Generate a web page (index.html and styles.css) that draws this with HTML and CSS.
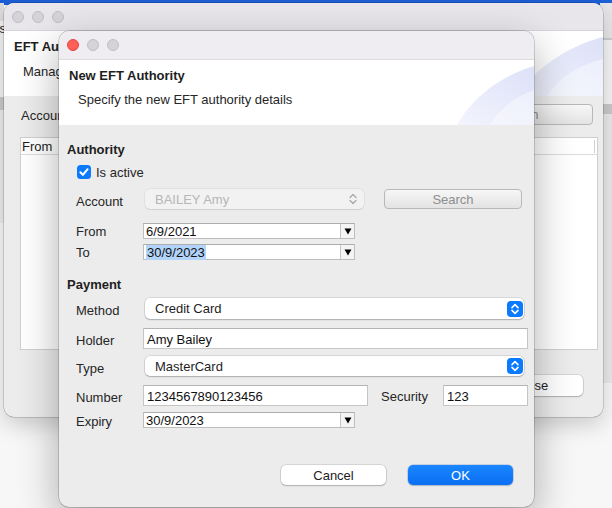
FILE: index.html
```html
<!DOCTYPE html>
<html>
<head>
<meta charset="utf-8">
<title>New EFT Authority</title>
<link rel="stylesheet" href="styles.css">
</head>
<body>
<div class="desk-top"></div>
<div class="back-left"><span class="back-left-text">Settings</span></div>
<div class="back-right"></div>

<div class="win win-main">
  <div class="titlebar">
    <span class="light"></span><span class="light"></span><span class="light"></span>
  </div>
  <div class="hdr">
    <div class="hdr-title">EFT Authorities</div>
    <div class="hdr-sub main-sub">Manage EFT authorities</div>
    <svg class="swirl swirl-main" viewBox="0 0 90 65" preserveAspectRatio="none">
      <defs>
        <linearGradient id="gm" x1="0" y1="1" x2="1" y2="0">
          <stop offset="0" stop-color="#f1f3fd"/>
          <stop offset="1" stop-color="#dde1f8"/>
        </linearGradient>
      </defs>
      <path d="M4 65 C 22 38, 52 16, 90 6 L90 65 Z" fill="url(#gm)"/>
      <path d="M34 65 C 46 46, 66 34, 90 28 L90 65 Z" fill="#ffffff" fill-opacity="0.4"/>
    </svg>
  </div>
  <div class="main-body">
    <div class="main-row">
      <span class="main-label">Account</span>
      <span class="btn-grad main-search">Search</span>
    </div>
    <div class="main-table">
      <div class="main-table-head"><span class="th-from">From</span><span class="th-end"></span></div>
    </div>
    <span class="btn-white main-close">Close</span>
  </div>
</div>

<div class="win dialog">
  <div class="titlebar dlg-titlebar">
    <span class="light red"></span><span class="light"></span><span class="light"></span>
  </div>
  <div class="hdr">
    <div class="hdr-title">New EFT Authority</div>
    <div class="hdr-sub dlg-sub">Specify the new EFT authority details</div>
    <svg class="swirl swirl-dlg" viewBox="0 0 80 65" preserveAspectRatio="none">
      <defs>
        <linearGradient id="gd" x1="0" y1="1" x2="1" y2="0">
          <stop offset="0" stop-color="#f3f4fd"/>
          <stop offset="1" stop-color="#dde1f8"/>
        </linearGradient>
      </defs>
      <path d="M3 65 C 18 38, 46 16, 80 6 L80 65 Z" fill="url(#gd)"/>
      <path d="M36 65 C 46 48, 62 36, 80 30 L80 65 Z" fill="#ffffff" fill-opacity="0.4"/>
    </svg>
  </div>

  <div class="dlg-body">
    <div class="section">Authority</div>

    <div class="row row-check">
      <span class="checkbox">
        <svg viewBox="0 0 14 14" width="14" height="14"><path d="M3.4 7.3 L5.9 9.9 L10.6 4.2" fill="none" stroke="#fff" stroke-width="2" stroke-linecap="round" stroke-linejoin="round"/></svg>
      </span>
      <span class="check-text">Is active</span>
    </div>

    <div class="row row-account">
      <span class="label">Account</span>
      <span class="combo-disabled">
        <span class="combo-text">BAILEY Amy</span>
        <svg class="chev-gray" viewBox="0 0 10 14" width="10" height="14"><path d="M2 5.5 L5 2.5 L8 5.5 M2 8.5 L5 11.5 L8 8.5" fill="none" stroke="#a8a8a8" stroke-width="1.3" stroke-linecap="round" stroke-linejoin="round"/></svg>
      </span>
      <span class="btn-grad dlg-search">Search</span>
    </div>

    <div class="row row-date row-from">
      <span class="label">From</span>
      <span class="datefield">
        <span class="date-text">6/9/2021</span>
        <span class="date-arrow"><svg viewBox="0 0 8 7" width="8" height="7"><path d="M0.5 0.5 H7.5 L4 6.5 Z" fill="#000"/></svg></span>
      </span>
    </div>

    <div class="row row-date row-to">
      <span class="label">To</span>
      <span class="datefield">
        <span class="date-text"><span class="sel">30/9/2023</span></span>
        <span class="date-arrow"><svg viewBox="0 0 8 7" width="8" height="7"><path d="M0.5 0.5 H7.5 L4 6.5 Z" fill="#000"/></svg></span>
      </span>
    </div>

    <div class="section section-pay">Payment</div>

    <div class="row row-method">
      <span class="label lbl-low">Method</span>
      <span class="popup">
        <span class="popup-text">Credit Card</span>
        <span class="stepper"><svg viewBox="0 0 16 16" width="16" height="16"><path d="M5 6.6 L8 3.6 L11 6.6 M5 9.4 L8 12.4 L11 9.4" fill="none" stroke="#fff" stroke-width="1.6" stroke-linecap="round" stroke-linejoin="round"/></svg></span>
      </span>
    </div>

    <div class="row row-holder">
      <span class="label lbl-low">Holder</span>
      <span class="textfield tf-holder">Amy Bailey</span>
    </div>

    <div class="row row-type">
      <span class="label lbl-low">Type</span>
      <span class="popup">
        <span class="popup-text">MasterCard</span>
        <span class="stepper"><svg viewBox="0 0 16 16" width="16" height="16"><path d="M5 6.6 L8 3.6 L11 6.6 M5 9.4 L8 12.4 L11 9.4" fill="none" stroke="#fff" stroke-width="1.6" stroke-linecap="round" stroke-linejoin="round"/></svg></span>
      </span>
    </div>

    <div class="row row-number">
      <span class="label lbl-low">Number</span>
      <span class="textfield tf-number">1234567890123456</span>
      <span class="label-sec">Security</span>
      <span class="textfield tf-sec">123</span>
    </div>

    <div class="row row-date row-expiry">
      <span class="label lbl-exp">Expiry</span>
      <span class="datefield">
        <span class="date-text">30/9/2023</span>
        <span class="date-arrow"><svg viewBox="0 0 8 7" width="8" height="7"><path d="M0.5 0.5 H7.5 L4 6.5 Z" fill="#000"/></svg></span>
      </span>
    </div>

    <div class="row row-buttons">
      <span class="btn-white dlg-cancel">Cancel</span>
      <span class="btn-blue dlg-ok">OK</span>
    </div>
  </div>
</div>
</body>
</html>
```

FILE: styles.css
```css
* { box-sizing: border-box; }
html, body { margin: 0; padding: 0; }
body {
  width: 612px;
  height: 508px;
  overflow: hidden;
  position: relative;
  background: #f7f7f7;
  font-family: "Liberation Sans", Arial, sans-serif;
  font-size: 13px;
  color: #262626;
}

/* desktop background pieces */
.desk-top {
  position: absolute;
  left: 0; top: 0;
  width: 612px; height: 5px;
  background: #1c5fd8;
}
.back-left {
  position: absolute;
  left: -100px; top: 3px;
  width: 104px; height: 220px;
  background: linear-gradient(to bottom, #dedede 0, #dedede 18px, #f3f3f3 18px, #f3f3f3 94px, #c9c9c9 94px, #c9c9c9 107px, #ebebeb 107px);
  overflow: hidden;
}
.back-left-text {
  position: absolute;
  right: -2px; top: 18px;
  color: #222;
}
.back-right {
  position: absolute;
  left: 600px; top: 3px;
  width: 30px; height: 380px;
  background: linear-gradient(to bottom, #e6e5e8 0, #e6e5e8 35px, #cdcdcd 35px, #cdcdcd 37px, #f4f4f4 37px, #f4f4f4 101px, #c9c9c9 101px, #c9c9c9 111px, #e9e9e9 111px);
}

/* windows */
.win {
  position: absolute;
  border-radius: 10px;
  background: #ececec;
  overflow: hidden;
  display: flex;
  flex-direction: column;
}
.win-main {
  z-index: 1;
  left: 4px; top: 3px;
  width: 599px; height: 414px;
  box-shadow: 0 0 0 0.5px rgba(0,0,0,0.28), 0 8px 22px rgba(0,0,0,0.18);
}
.dialog {
  z-index: 2;
  left: 59px; top: 31px;
  width: 475px; height: 476px;
  box-shadow: 0 0 0 0.5px rgba(0,0,0,0.3), 0 14px 40px rgba(0,0,0,0.32);
}

.titlebar {
  flex: none;
  height: 28px;
  display: flex;
  align-items: center;
  gap: 8px;
  padding-left: 8px;
  background: #e8e6ea;
  border-bottom: 1px solid #d6d4d8;
}
.dlg-titlebar {
  height: 29px;
  background: #efedf1;
  border-bottom-color: #dddbe0;
}
.light {
  width: 12px; height: 12px;
  border-radius: 50%;
  background: #d4d3d7;
  border: 0.5px solid #bebdc2;
}
.light.red {
  background: #fe5f57;
  border-color: #e2463f;
}

.hdr {
  flex: none;
  height: 65px;
  background: #ffffff;
  position: relative;
  overflow: hidden;
  padding: 8px 0 0 10px;
}
.hdr-title {
  font-weight: bold;
  line-height: 16px;
  color: #1e1e1e;
  position: relative;
  z-index: 1;
}
.hdr-sub {
  line-height: 16px;
  margin-left: 9px;
  position: relative;
  z-index: 1;
}
.main-sub { margin-top: 9px; }
.dlg-sub { margin-top: 8px; }

.swirl {
  position: absolute;
  top: 0; right: 0;
  height: 65px;
}
.swirl-main { width: 90px; }
.swirl-dlg { width: 80px; }

/* main window body */
.main-body {
  flex: 1;
  display: flex;
  flex-direction: column;
  padding: 8px 5px 0 16px;
}
.main-row {
  height: 21px;
  display: flex;
  align-items: center;
  justify-content: space-between;
}
.main-label { margin-left: 1px; padding-top: 1px; }
.main-search {
  width: 150px;
  height: 21px;
  margin-right: 5px;
}
.main-table {
  margin-top: 12px;
  height: 213px;
  background: #ffffff;
  border: 1px solid #cfcfcf;
}
.main-table-head {
  height: 17px;
  display: flex;
  align-items: center;
  justify-content: space-between;
  border-bottom: 1px solid #dcdcdc;
  padding-left: 1px;
  color: #1e1e1e;
}
.th-end {
  width: 1px; height: 13px;
  background: #cfcfcf;
  margin-right: 2px;
}
.main-close {
  align-self: flex-end;
  margin-top: 25px;
  margin-right: 15px;
  width: 103px;
  height: 21px;
}

/* buttons */
.btn-grad {
  display: flex;
  align-items: center;
  justify-content: center;
  border: 1px solid #b8b8b8;
  border-radius: 4px;
  background: linear-gradient(to bottom, #f7f7f7, #e3e3e3);
  color: #8e8e8e;
}
.btn-white {
  display: flex;
  align-items: center;
  justify-content: center;
  border-radius: 5px;
  background: #ffffff;
  box-shadow: 0 0 0 0.5px rgba(0,0,0,0.2), 0 1px 1.5px rgba(0,0,0,0.18);
  color: #222;
}
.btn-blue {
  display: flex;
  align-items: center;
  justify-content: center;
  border-radius: 5px;
  background: linear-gradient(to bottom, #1a86ff, #0a6ff2);
  box-shadow: 0 0 0 0.5px rgba(0,60,160,0.3), 0 1px 1.5px rgba(0,0,0,0.15);
  color: #ffffff;
}

/* dialog body */
.dlg-body {
  flex: 1;
  display: flex;
  flex-direction: column;
  padding-left: 8px;
}
.section {
  margin-top: 17px;
  line-height: 16px;
  font-weight: bold;
  color: #1e1e1e;
}
.section-pay { margin-top: 17px; }

.row {
  display: flex;
  align-items: center;
  padding-left: 9px;
}
.label {
  width: 67px;
  flex: none;
}
.lbl-low { padding-top: 4px; }
.lbl-exp { padding-top: 3px; }

.row-check { margin-top: 6px; height: 16px; }
.checkbox {
  width: 14px; height: 14px;
  margin-left: 1px;
  border-radius: 3.5px;
  background: #0a7aff;
  display: flex;
}
.check-text { margin-left: 5px; }

.row-account { margin-top: 9px; height: 20px; }
.row-account .label { padding-top: 4px; }
.combo-disabled {
  margin-left: 2px;
  width: 219px; height: 20px;
  border-radius: 5px;
  background: #f2f2f2;
  box-shadow: 0 0 0 0.5px rgba(0,0,0,0.07), 0 0.5px 1px rgba(0,0,0,0.08);
  display: flex;
  align-items: center;
  justify-content: space-between;
  padding: 0 6px 0 10px;
}
.combo-text { color: #b6b6b6; }
.dlg-search {
  margin-left: 20px;
  width: 138px; height: 20px;
}

.row-date { height: 16px; }
.row-from { margin-top: 14px; }
.row-to { margin-top: 5px; }
.row-expiry { margin-top: 6px; }
.datefield {
  width: 212px; height: 16px;
  background: #ffffff;
  border: 1px solid #bdbdbd;
  border-top-color: #adadad;
  display: flex;
  justify-content: space-between;
}
.date-text {
  line-height: 14px;
  padding: 1px 0 0 2px;
  color: #111;
}
.sel {
  background: #b2d4fb;
  padding: 0 1px;
}
.date-arrow {
  width: 14px;
  border-left: 1px solid #c4c4c4;
  background: #f4f4f4;
  display: flex;
  align-items: center;
  justify-content: center;
}

.row-method { margin-top: 5px; height: 21px; }
.row-type { margin-top: 7px; height: 20px; }
.popup {
  margin-left: 2px;
  width: 379px; height: 100%;
  border-radius: 5px;
  background: #ffffff;
  box-shadow: 0 0 0 0.5px rgba(0,0,0,0.17), 0 1px 1.5px rgba(0,0,0,0.2);
  display: flex;
  align-items: center;
  justify-content: space-between;
  padding: 0 1px 0 10px;
}
.popup-text { color: #1e1e1e; }
.stepper {
  width: 16px; height: 16px;
  border-radius: 4px;
  background: #0a7aff;
  display: flex;
}

.row-holder { margin-top: 9px; height: 21px; }
.row-number { margin-top: 9px; height: 21px; }
.textfield {
  height: 100%;
  background: #ffffff;
  border: 1px solid #c6c6c6;
  border-top-color: #b4b4b4;
  display: flex;
  align-items: center;
  padding: 2px 0 0 3px;
  color: #111;
}
.tf-holder { width: 385px; }
.tf-number { width: 225px; }
.label-sec {
  width: 62px;
  margin-left: 13px;
  padding-top: 1px;
}
.tf-sec { width: 85px; }

.row-buttons { margin-top: 37px; height: 20px; padding-left: 214px; }
.dlg-cancel { width: 105px; height: 20px; }
.dlg-ok { width: 105px; height: 20px; margin-left: 22px; }
```
